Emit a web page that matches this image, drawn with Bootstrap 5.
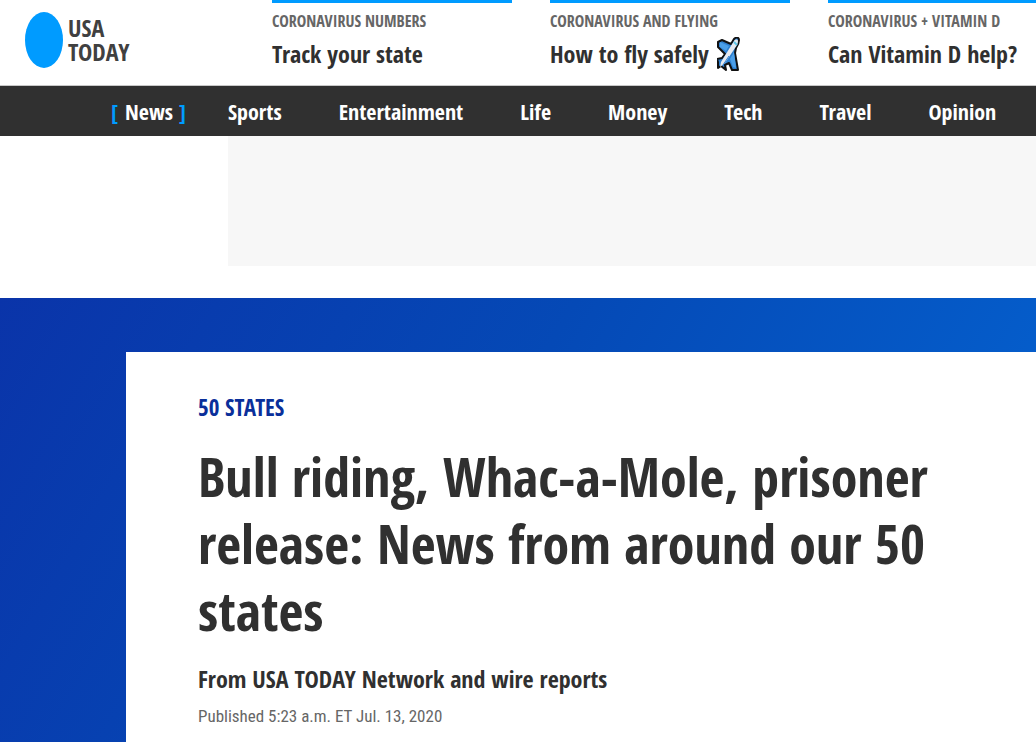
<!DOCTYPE html>
<html lang="en">
<head>
<meta charset="utf-8">
<meta name="viewport" content="width=device-width, initial-scale=1">
<title>50 States: News from around our 50 states | USA TODAY</title>
<link rel="stylesheet" href="https://cdn.jsdelivr.net/npm/bootstrap@5.3.0/dist/css/bootstrap.min.css">
<style>
:root { --ink: #303030; --brand: #009bff; }
body { font-family: "Open Sans Condensed", "Roboto Condensed", sans-serif; font-weight: 700; color: var(--ink); overflow-x: hidden; }
a { color: inherit; text-decoration: none; }
.masthead { height: 86px; border-bottom: 1px solid #c8c8c8; overflow: hidden; }
.brand-link { flex: 0 0 248px; padding: 12px 0 0 25px; gap: 5px; color: #404040; }
.brand-text { font-size: 24px; line-height: 24px; padding-top: 4px; }
.teasers { gap: 38px; margin-left: 24px; }
.teaser { flex: 0 0 240px; border-top: 3px solid var(--brand); white-space: nowrap; }
.teaser-topic { font-size: 16px; line-height: 20px; padding-top: 8px; color: #666; display: block; }
.teaser-title { font-size: 24px; height: 34px; margin-top: 6px; gap: 8px; }
.sections { background: var(--ink); color: #fff; height: 50px; padding-left: 111px; gap: 57px; font-size: 22px; line-height: 50px; white-space: nowrap; }
.sections .current { margin-right: -15px; }
.sections .current::before { content: "["; color: var(--brand); margin-right: 7px; }
.sections .current::after { content: "]"; color: var(--brand); margin-left: 6px; }
.ad-slot { margin-left: 228px; height: 130px; background: #f7f7f7; }
.ad-area { padding-bottom: 32px; }
.story-band { padding: 54px 0 0 126px; min-height: calc(100vh - 298px); background: linear-gradient(120deg, #0a34a9 0, #0549b6 500px, #0560ce 1000px); }
.story { padding: 42px 72px 12px; min-height: 390px; }
.kicker { font-size: 23px; line-height: 26px; color: #0a2f9a; display: block; }
.story h1 { font-size: 54px; line-height: 67px; font-weight: 700; margin: 23px 0 0; max-width: 740px; }
.byline { font-size: 24px; line-height: 30px; margin: 20px 0 0; }
.published { font-family: "Roboto Condensed", sans-serif; font-weight: 400; font-size: 17px; line-height: 24px; margin: 10px 0 0; color: #666; }
</style>
</head>
<body>
<header>
  <div class="masthead d-flex bg-white">
    <a href="#" class="brand-link d-flex align-items-start" aria-label="USA TODAY">
      <svg width="38" height="56" viewBox="0 0 38 56" aria-hidden="true"><ellipse cx="19" cy="28" rx="19" ry="28" fill="#009bff"/></svg>
      <span class="brand-text">USA<br>TODAY</span>
    </a>
    <div class="teasers d-flex">
      <a href="#" class="teaser"><span class="teaser-topic">CORONAVIRUS NUMBERS</span><span class="teaser-title d-flex align-items-center">Track your state</span></a>
      <a href="#" class="teaser"><span class="teaser-topic">CORONAVIRUS AND FLYING</span><span class="teaser-title d-flex align-items-center">How to fly safely
        <svg width="23" height="34" viewBox="0 0 23 34" aria-hidden="true">
          <path d="M1 5L5 3l9 4 3-5c2-2 5-2 5 1 0 3-1 5-3 8l-1 5 3 17h-6l-3-7-4 2 1 5-5-4-3 2v-6l-1-3 5-1 3-4-7-7z" fill="#2d7fcf" stroke="#111" stroke-width="2" stroke-linejoin="round"/>
          <path d="M3 5l9 4-3 5-6-4zM17 15l2 16-3-1-3-8z" fill="#4b9fe8"/>
          <path d="M17 4c1-2 4-2 4 0s-1 5-3 7L8 26l-5 4 1-5z" fill="#e6eaf0"/>
          <path d="M17 5l3 3" stroke="#62c8e8" stroke-width="2"/>
          <path d="M6 28l6-9" stroke="#2f7fd0" stroke-width="1"/>
        </svg></span></a>
      <a href="#" class="teaser"><span class="teaser-topic">CORONAVIRUS + VITAMIN D</span><span class="teaser-title d-flex align-items-center">Can Vitamin D help?</span></a>
    </div>
  </div>
  <nav class="sections d-flex" aria-label="Sections">
    <a href="#" class="current" aria-current="page">News</a>
    <a href="#">Sports</a>
    <a href="#">Entertainment</a>
    <a href="#">Life</a>
    <a href="#">Money</a>
    <a href="#">Tech</a>
    <a href="#">Travel</a>
    <a href="#">Opinion</a>
  </nav>
</header>
<div class="ad-area bg-white"><div class="ad-slot"></div></div>
<main class="story-band">
  <article class="story bg-white">
    <a href="#" class="kicker">50 STATES</a>
    <h1>Bull riding, Whac-a-Mole, prisoner release: News from around our 50 states</h1>
    <p class="byline">From USA TODAY Network and wire reports</p>
    <p class="published">Published 5:23 a.m. ET Jul. 13, 2020</p>
  </article>
</main>
<script src="https://cdn.jsdelivr.net/npm/bootstrap@5.3.0/dist/js/bootstrap.bundle.min.js"></script>
</body>
</html>
